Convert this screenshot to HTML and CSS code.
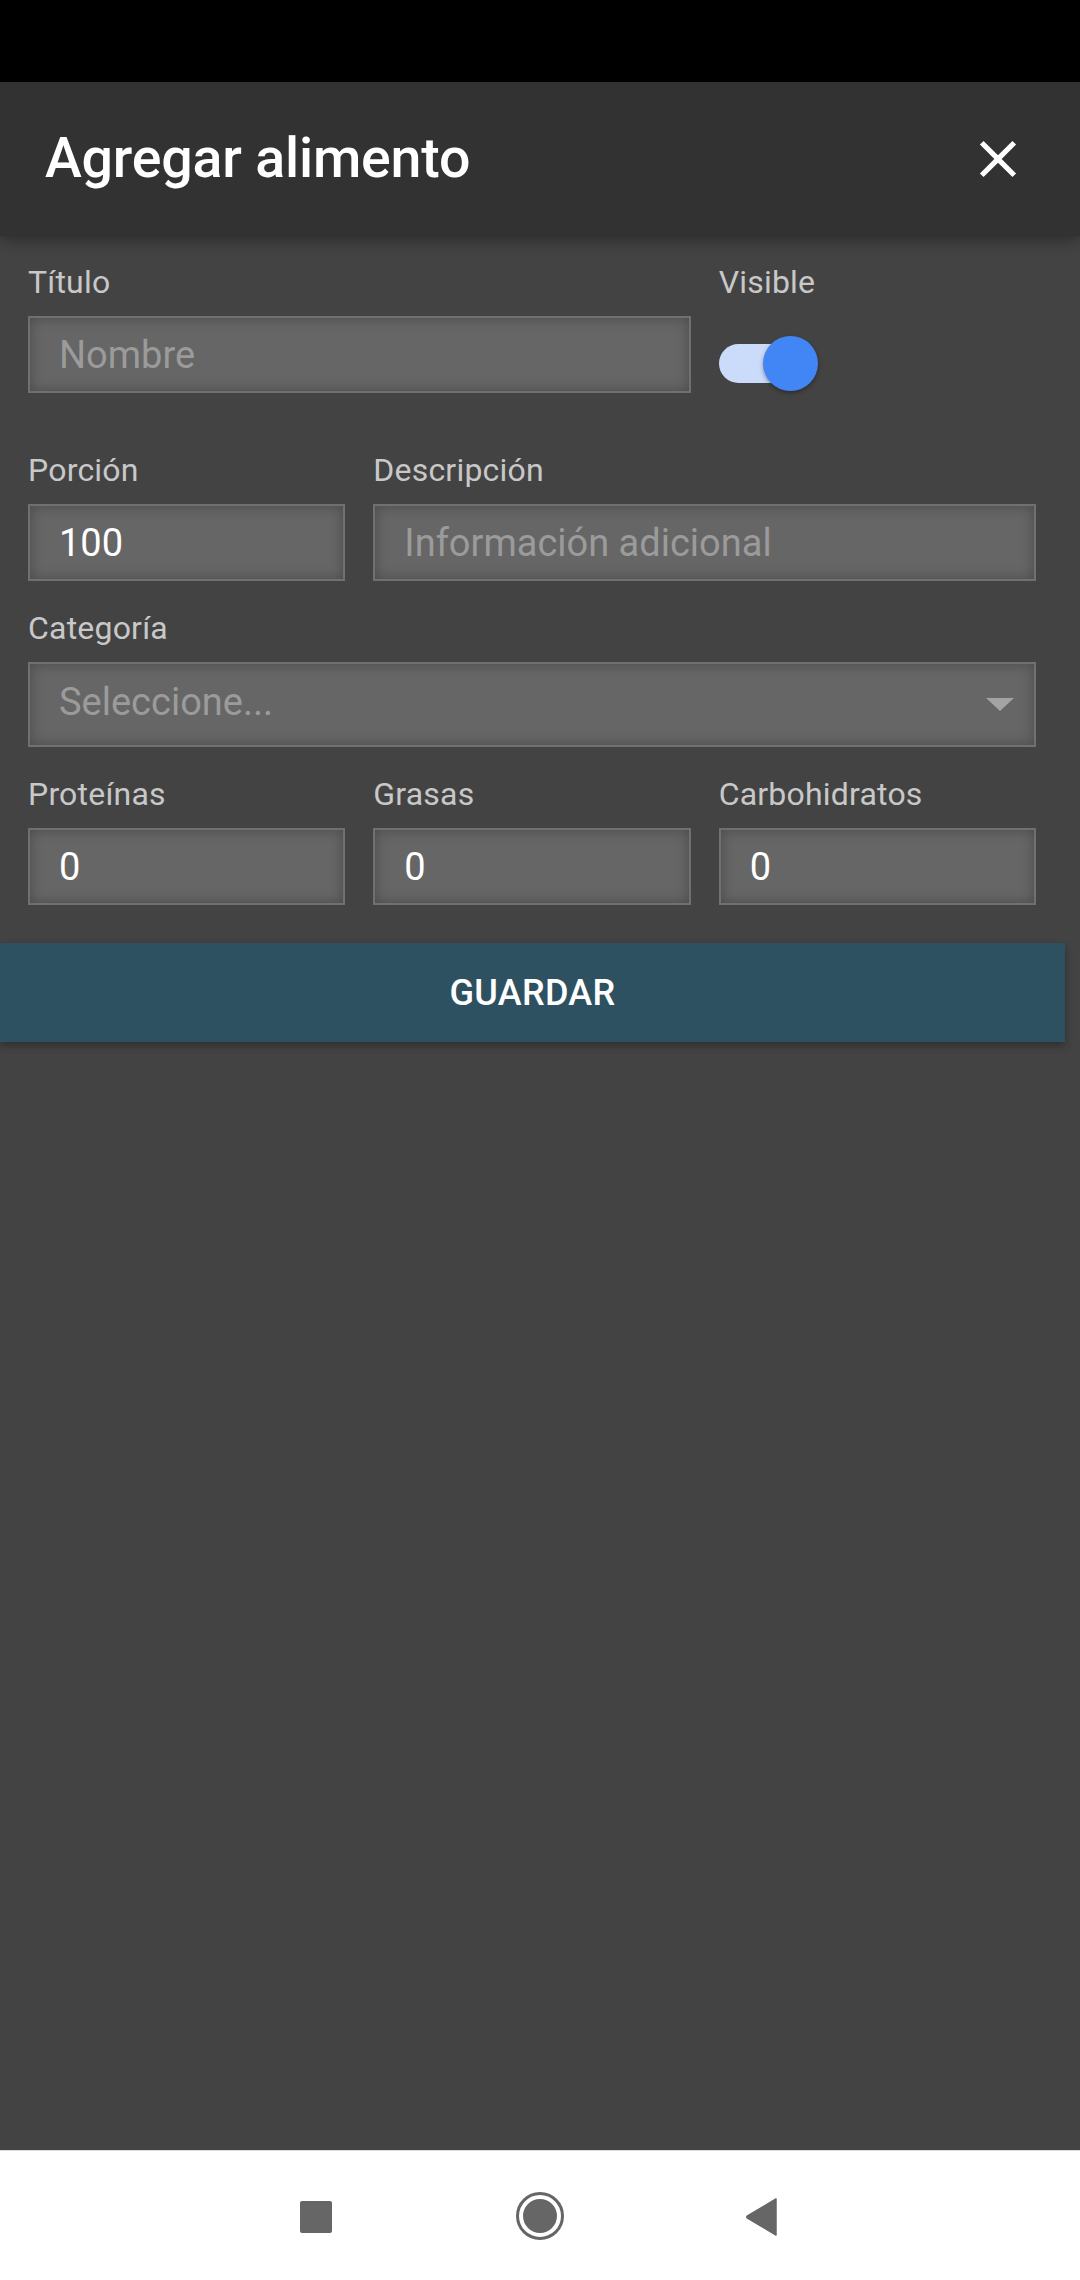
FILE: index.html
```html
<!DOCTYPE html>
<html lang="es">
<head>
<meta charset="utf-8">
<title>Agregar alimento</title>
<link rel="stylesheet" href="styles.css">
</head>
<body>
<div class="statusbar"></div>
<header class="appbar">
  <h1 class="appbar-title">Agregar alimento</h1>
  <button class="close-btn" aria-label="Cerrar">
    <svg viewBox="0 0 24 24" width="62" height="62"><path fill="#fff" d="M19 6.41L17.59 5 12 10.59 6.41 5 5 6.41 10.59 12 5 17.59 6.41 19 12 13.41 17.59 19 19 17.59 13.41 12z"/></svg>
  </button>
</header>
<main class="content">
  <form class="form">
    <div class="field span-2 row-1">
      <label class="label">Título</label>
      <div class="input placeholder">Nombre</div>
    </div>
    <div class="field row-1">
      <label class="label">Visible</label>
      <div class="switch">
        <div class="switch-track"></div>
        <div class="switch-thumb"></div>
      </div>
    </div>
    <div class="field">
      <label class="label">Porción</label>
      <div class="input">100</div>
    </div>
    <div class="field span-2">
      <label class="label">Descripción</label>
      <div class="input placeholder">Información adicional</div>
    </div>
    <div class="field span-3">
      <label class="label">Categoría</label>
      <div class="input select placeholder">
        <span>Seleccione...</span>
        <span class="caret"></span>
      </div>
    </div>
    <div class="field">
      <label class="label">Proteínas</label>
      <div class="input">0</div>
    </div>
    <div class="field">
      <label class="label">Grasas</label>
      <div class="input">0</div>
    </div>
    <div class="field">
      <label class="label">Carbohidratos</label>
      <div class="input">0</div>
    </div>
  </form>
  <button class="save-btn">GUARDAR</button>
</main>
<nav class="navbar">
  <span class="nav-square"></span>
  <span class="nav-home"><span class="nav-home-dot"></span></span>
  <svg class="nav-back" viewBox="0 0 32 38" width="32" height="38"><path fill="#666" d="M31 1 L31 37 L2.5 20.2 Q1 19 2.5 17.8 Z" stroke="#666" stroke-width="1.5" stroke-linejoin="round"/></svg>
</nav>
</body>
</html>
```
FILE: styles.css
```css
* { box-sizing: border-box; }
html, body { margin: 0; padding: 0; }
body {
  width: 1080px;
  height: 2280px;
  background: #434343;
  font-family: Roboto, "Noto Sans", "Liberation Sans", sans-serif;
  display: flex;
  flex-direction: column;
  overflow: hidden;
}
.statusbar { height: 82px; background: #000; flex: none; }
.appbar {
  height: 154px;
  flex: none;
  background: #323232;
  display: flex;
  align-items: center;
  justify-content: space-between;
  padding: 0 51px 0 45px;
  position: relative;
  z-index: 2;
  box-shadow: 0 4px 14px rgba(0,0,0,0.35);
}
.appbar-title {
  margin: 0;
  color: #fff;
  font-size: 55.5px;
  font-weight: 500;
  letter-spacing: -0.2px;
  line-height: 1;
  margin-top: 0;
}
.close-btn {
  background: none;
  border: 0;
  padding: 0;
  width: 62px;
  height: 62px;
  display: flex;
  margin-top: 0;
}
.content {
  flex: 1;
  padding: 27px 44px 0 28px;
}
.form {
  display: grid;
  grid-template-columns: repeat(3, 1fr);
  column-gap: 28px;
  row-gap: 28px;
}
.field { display: flex; flex-direction: column; min-width: 0; }
.span-2 { grid-column: span 2; }
.span-3 { grid-column: span 3; }
.row-1 { margin-bottom: 30px; }
.label {
  color: #c8c8c8;
  font-size: 32px;
  letter-spacing: 0.2px;
  line-height: 38px;
  margin-bottom: 15px;
}
.input {
  height: 77px;
  border: 2px solid #707070;
  background: #666;
  box-shadow: inset 0 0 14px rgba(0,0,0,0.28);
  color: #fff;
  font-size: 38px;
  line-height: 74px;
  padding-left: 29px;
  white-space: nowrap;
}
.placeholder { color: #9b9b9b; }
.select {
  height: 85px;
  display: flex;
  align-items: center;
  justify-content: space-between;
  line-height: 1;
  padding-right: 20px;
  padding-bottom: 5px;
}
.caret {
  width: 0;
  height: 0;
  border-left: 14px solid transparent;
  border-right: 14px solid transparent;
  border-top: 13px solid #a3a3a3;
  margin-top: 4px;
}
.switch {
  position: relative;
  width: 100px;
  height: 56px;
  margin-top: 20px;
}
.switch-track {
  position: absolute;
  left: 0;
  top: 8px;
  width: 93px;
  height: 39px;
  border-radius: 20px;
  background: #cbdcfb;
}
.switch-thumb {
  position: absolute;
  left: 44px;
  top: 0;
  width: 55px;
  height: 55px;
  border-radius: 50%;
  background: #4285f4;
  box-shadow: 0 2px 4px rgba(0,0,0,0.35);
}
.save-btn {
  display: block;
  margin: 38px 0 0 -28px;
  width: 1065px;
  height: 99px;
  background: #2e5161;
  border: 0;
  color: #fff;
  font-family: Roboto, "Noto Sans", "Liberation Sans", sans-serif;
  font-size: 36px;
  font-weight: 500;
  letter-spacing: 0.3px;
  box-shadow: 0 4px 8px rgba(0,0,0,0.3);
  padding: 0;
}
.navbar {
  flex: none;
  height: 130px;
  background: #fff;
  border-top: 1px solid #ddd;
  display: flex;
  align-items: center;
  justify-content: center;
  padding-right: 4px;
}
.nav-square {
  width: 32px;
  height: 32px;
  background: #666;
  border-radius: 2px;
  margin-top: 2px;
}
.nav-home {
  width: 48px;
  height: 48px;
  border: 3px solid #666;
  border-radius: 50%;
  display: flex;
  align-items: center;
  justify-content: center;
  margin-left: 184px;
}
.nav-home-dot {
  width: 34px;
  height: 34px;
  border-radius: 50%;
  background: #666;
}
.nav-back {
  margin-left: 181px;
  margin-top: 2px;
}
```
